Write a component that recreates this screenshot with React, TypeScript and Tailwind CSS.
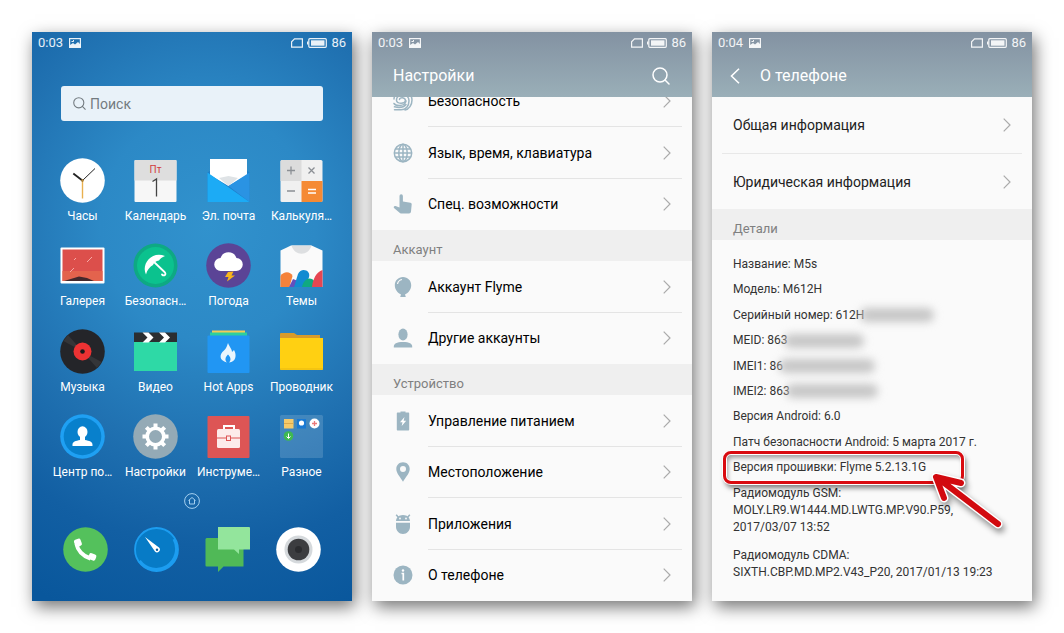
import type { ReactNode } from "react";

type AppItem = { name: string; icon: ReactNode };
type Setting = { name: string; icon: ReactNode };

const apps: AppItem[] = [
  {
    name: "Часы",
    icon: (
      <>
        <circle cx="22.5" cy="22.5" r="22.3" fill="#fff" />
        <path d="M22.5 22.5V40.5" stroke="#e9b04f" strokeWidth="1.4" />
        <path d="M22.5 22.5L35 10.5" stroke="#222" strokeWidth="1" />
        <path d="M23 23L13.3 15.5" stroke="#222" strokeWidth="1.8" />
        <circle cx="22.5" cy="22.5" r="1.3" fill="#b98a3a" />
      </>
    ),
  },
  {
    name: "Календарь",
    icon: (
      <>
        <rect x="1.5" y="2" width="42" height="42" rx="1" fill="#f7f7f7" />
        <path d="M1.5 3a1 1 0 0 1 1-1h40a1 1 0 0 1 1 1v19.500h-42z" fill="#dedede" />
        <text x="22.5" y="14.500" fontSize="10" textAnchor="middle" fill="#d23c3c">Пт</text>
        <path d="M19.500 23.500l4-2.500v17.500" fill="none" stroke="#444" strokeWidth="1.300" />
      </>
    ),
  },
  {
    name: "Эл. почта",
    icon: (
      <>
        <path d="M1.500 14.500l3-2h36.500l2.500 2V44h-42z" fill="#1f7fc9" />
        <path d="M4 1h37v16L22.500 28 4 17z" fill="#fff" />
        <path d="M13 20l9.500-2 9.500 2-9.500 8z" fill="#dfe3e6" />
        <path d="M43.500 14.500V44L22.500 28z" fill="#2a93e3" />
        <path d="M1.500 14.500L43.500 44h-42z" fill="#1cabf5" />
      </>
    ),
  },
  {
    name: "Калькуля…",
    icon: (
      <>
        <rect x="1.500" y="2" width="42" height="42" rx="1.500" fill="#f0f0f0" />
        <path d="M1.500 3.500A1.500 1.500 0 0 1 3 2h19.500v21h-21z" fill="#dcdcdc" />
        <path d="M22.500 23h21v19.500a1.500 1.500 0 0 1-1.500 1.500H22.500z" fill="#f58a34" />
        <path d="M8 12.500h8M12 8.500v8M8 33h8M29.500 9.500l6 6M35.500 9.500l-6 6" stroke="#8b8f94" strokeWidth="1.300" />
        <path d="M29 31.500h8M29 35h8" stroke="#fff" strokeWidth="1.300" />
      </>
    ),
  },
  {
    name: "Галерея",
    icon: (
      <>
        <rect x=".5" y="4.500" width="44" height="36" rx="1" fill="#fff" />
        <path d="M2.500 6.500h40v31.500h-40z" fill="#dc4f4b" />
        <path d="M2.500 28h40v10h-40z" fill="#e3634d" />
        <path d="M4 38l15-4.500 8 1.500 7 3z" fill="#43282c" />
        <path d="M27 19l5-5M10 29l4-4M14 17l2-2" stroke="#f6aaa5" strokeWidth="1" />
      </>
    ),
  },
  {
    name: "Безопасн…",
    icon: (
      <>
        <circle cx="22.5" cy="22.5" r="22" fill="#0ea983" />
        <circle cx="22.5" cy="22.5" r="18.500" fill="#0bc28e" />
        <path d="M13 31.500c-5-9.500 5-24 19-18.500-3 1.500-5 2.500-6 4.500-3 .5-5 2-6 4.500-3 1.500-6 5-7 9.500z" fill="#fff" />
        <path d="M20 18l11.500 11c2.500 2.500-.5 4.500-2.500 2.500" fill="none" stroke="#fff" strokeWidth="1.800" strokeLinecap="round" />
      </>
    ),
  },
  {
    name: "Погода",
    icon: (
      <>
        <circle cx="22.5" cy="22.5" r="22.3" fill="#5b4496" />
        <path d="M15 28a6.500 6.500 0 0 1-.5-13 8.500 8.500 0 0 1 16 0A6.500 6.500 0 0 1 30 28z" fill="#fff" />
        <path d="M22 29l5.500-.5-2 4h3.500l-8 6 1.500-4.500H19z" fill="#f8b51c" />
      </>
    ),
  },
  {
    name: "Темы",
    icon: (
      <>
        <path d="M12 2.500h20.500L43.500 7.500V44h-42V7.500z" fill="#fafafa" />
        <path d="M12.500 2.500c3 11 17 11 20 0z" fill="#dddfe1" />
        <path d="M1.500 44V33c3-5 10-5 12 0l-3 11z" fill="#f5823a" />
        <path d="M10 44l4-8 5 2v6z" fill="#6350bd" />
        <path d="M15 44l4-13c3-7 13-4 11 3l-3 10z" fill="#128bd1" />
        <path d="M23 44c2-9 9-11 13-5l-2 5z" fill="#10a980" />
        <path d="M33 44c1-8 4-15 10.500-17v17z" fill="#e64652" />
      </>
    ),
  },
  {
    name: "Музыка",
    icon: (
      <>
        <circle cx="22.5" cy="22.5" r="22.3" fill="#242529" />
        <path d="M22.500 22.500L8 6l-4.500 6zM22.500 22.500L37 39l4.500-6z" fill="#343538" />
        <circle cx="22.5" cy="22.5" r="9" fill="#ec3233" />
        <circle cx="22.5" cy="22.5" r="2.300" fill="#1a1a1c" />
      </>
    ),
  },
  {
    name: "Видео",
    icon: (
      <>
        <path d="M1 3.500h43v10H1z" fill="#2b2e31" />
        <path d="M1 13h43v29H1z" fill="#2ed9a6" />
        <path d="M9.500 3.500h6l5 5-5 5h-6l5-5zM26 3.500h6l5 5-5 5h-6l5-5z" fill="#fff" />
      </>
    ),
  },
  {
    name: "Hot Apps",
    icon: (
      <>
        <path d="M6 1.500h33v4H6z" fill="#f2cb56" />
        <path d="M4 3.500h37v5H4z" fill="#2ccf9e" />
        <rect x="1.500" y="6.500" width="42" height="37.500" rx="1" fill="#2196f3" />
        <path d="M22 14c2 5 4 6 4 9l2-2c3 5 2 12-5 12.500 3-3 1-6-1-8-2 2-4 5-1 8-8-2-8-8-3-12 3-3 3-5 4-7.500z" fill="#eaf5fd" />
      </>
    ),
  },
  {
    name: "Проводник",
    icon: (
      <>
        <path d="M1 5a1 1 0 0 1 1-1h13l3 2h23v5H1z" fill="#d79b2a" />
        <path d="M1 9h43v31a1 1 0 0 1-1 1H2a1 1 0 0 1-1-1z" fill="#ffd012" />
        <path d="M1 40h43" stroke="#e9b910" />
      </>
    ),
  },
  {
    name: "Центр по…",
    icon: (
      <>
        <circle cx="22.5" cy="22.5" r="22.3" fill="#1fa0f3" />
        <circle cx="22.5" cy="22.5" r="18.800" fill="#0880cc" />
        <ellipse cx="22.5" cy="18" rx="5" ry="5.800" fill="#fff" />
        <path d="M20 22h5v4c4 1 8 1 7.500 6h-20c-.5-5 3.500-5 7.500-6z" fill="#fff" />
      </>
    ),
  },
  {
    name: "Настройки",
    icon: (
      <>
        <circle cx="22.5" cy="22.5" r="22.3" fill="#94aab6" />
        <circle cx="22.5" cy="22.5" r="8.300" fill="none" stroke="#fff" strokeWidth="3.600" />
        <path
          d="M22.500 9.500v4M22.500 31.500v4M9.500 22.500h4M31.500 22.500h4M13.300 13.300l2.800 2.800M28.900 28.900l2.800 2.800M31.700 13.300l-2.800 2.800M16.100 28.900l-2.800 2.800"
          stroke="#fff"
          strokeWidth="4"
        />
      </>
    ),
  },
  {
    name: "Инструме…",
    icon: (
      <>
        <rect x="1.500" y="2" width="42" height="42" rx="1" fill="#dd5555" />
        <path d="M18 16v-4h10v4" fill="none" stroke="#fff" strokeWidth="2" />
        <rect x="11" y="15" width="23" height="19" rx="1.500" fill="#fdebea" />
        <path d="M11 24h23" stroke="#dd5555" />
        <rect x="20.500" y="22" width="4" height="4.500" fill="#fdebea" stroke="#dd5555" />
      </>
    ),
  },
  {
    name: "Разное",
    icon: (
      <>
        <rect x="1" y="1" width="43" height="43" rx="1.500" fill="#fff" opacity=".15" />
        <path d="M5 5h9.500v9.500H5z" fill="#f6ca6a" />
        <path d="M5 9.500h9.500" stroke="#dda94d" />
        <path d="M18 5h9v9.500h-9z" fill="#1979d3" />
        <circle cx="22.500" cy="9" r="2.600" fill="#fff" />
        <circle cx="35.500" cy="9.500" r="5" fill="#fff" />
        <path d="M33 9.500h5M35.500 7v5" stroke="#e8797a" strokeWidth="1.300" />
        <circle cx="9.500" cy="22" r="4.800" fill="#3fb950" />
        <path d="M9.500 19.500v4.500M7.500 22.500l2 2 2-2" stroke="#fff" fill="none" />
      </>
    ),
  },
];

const dock: AppItem[] = [
  {
    name: "Телефон",
    icon: (
      <>
        <circle cx="22.5" cy="22.500" r="22.300" fill="#54c15c" />
        <path d="M13.500 17c1 6 6 12 14 14.500" fill="none" stroke="#fff" strokeWidth="4" />
        <rect x="11.500" y="12" width="7" height="7.500" rx="2" transform="rotate(-20 15 16)" fill="#fff" />
        <rect x="25.500" y="26.500" width="7.500" height="6.500" rx="2" transform="rotate(20 29 30)" fill="#fff" />
      </>
    ),
  },
  {
    name: "Браузер",
    icon: (
      <>
        <circle cx="22.500" cy="22.500" r="21.500" fill="#077bc6" stroke="#1c9df0" strokeWidth="1.800" />
        <path d="M40 12A20.500 20.500 0 0 1 5.500 34" fill="none" stroke="#1c9df0" strokeWidth="3" />
        <path d="M11 10l14 10.500a2.500 2.500 0 0 1-4 4z" fill="#fff" />
        <circle cx="23" cy="22.700" r="1.200" fill="#0a5c9c" />
      </>
    ),
  },
  {
    name: "Сообщения",
    icon: (
      <>
        <path d="M1.500 11h37v28.500H18.500L13 45v-5.500H1.500a1 1 0 0 1-1-1V12z" fill="#50b957" />
        <path d="M13 0h31a1 1 0 0 1 1 1v21.500H34V27l-5-4.500H13z" fill="#93e59c" />
      </>
    ),
  },
  {
    name: "Камера",
    icon: (
      <>
        <circle cx="22.500" cy="22.500" r="22.300" fill="#fff" />
        <circle cx="22.500" cy="22.500" r="14" fill="#d5d9dc" />
        <circle cx="22.500" cy="22.500" r="10.800" fill="#3c3d40" />
        <circle cx="22.500" cy="22.500" r="3.500" fill="#2b2c2f" />
      </>
    ),
  },
];

const security: Setting = {
  name: "Безопасность",
  icon: (
    <g fill="none" stroke="currentColor" strokeWidth="1.500" strokeLinecap="round">
      <path d="M1 8C1 4 5 1 10 1s9 3 9 8-3 9.500-7 10" />
      <path d="M1.500 18.800h6.500c5 0 8-4 8-9C16 2 3 2 3.500 9.500c.5 3.500 8 3.500 9 .5 0-4-6-4-6-1.500" />
      <path d="M1 12.500c1.500 2.500 11 3.500 12-2.500M1.500 15.800c4 1 9 .8 11.500-2.300" />
    </g>
  ),
};

const general: Setting[] = [
  {
    name: "Язык, время, клавиатура",
    icon: (
      <g fill="none" stroke="currentColor" strokeWidth="1.500">
        <circle cx="10" cy="10" r="8.700" />
        <ellipse cx="10" cy="10" rx="4.200" ry="8.700" />
        <path d="M10 1.300v17.400M2.500 6h15M2.500 14h15M1.300 10h17.400" />
      </g>
    ),
  },
  {
    name: "Спец. возможности",
    icon: (
      <path
        fill="currentColor"
        d="M6.500 2a1.700 1.700 0 0 1 3.400 0v5.500l7.600 1.300c.8.200 1.200.7 1.200 1.500L18 17.500c-.2 1.300-.8 2-2 2H8.500c-1 0-1.500-.4-2.200-1L1 14c-.8-1 .2-2.500 1.500-2l4 1.500z"
      />
    ),
  },
];

const account: Setting[] = [
  {
    name: "Аккаунт Flyme",
    icon: (
      <>
        <path fill="currentColor" d="M10 0c4.800 0 8.200 3.600 8.200 8.300 0 4.200-2.700 7.500-6.200 9.200l.8 2.500H7.200l.8-2.500c-3.500-1.700-6.200-5-6.200-9.200C1.800 3.600 5.200 0 10 0z" />
        <path d="M4.500 7c.5-2.500 2-4 4.500-4.500" fill="none" stroke="#fafafa" strokeWidth="1.200" />
      </>
    ),
  },
  {
    name: "Другие аккаунты",
    icon: (
      <>
        <ellipse cx="10" cy="6.500" rx="4.600" ry="6" fill="currentColor" />
        <path fill="currentColor" d="M.8 19.500c-.5-4 3-5.500 9.200-5.500s9.700 1.500 9.200 5.500z" />
      </>
    ),
  },
];

const device: Setting[] = [
  {
    name: "Управление питанием",
    icon: (
      <>
        <path fill="currentColor" d="M7.500.5h5v1h2.700c.6 0 1 .4 1 1v16c0 .6-.4 1-1 1H4.800c-.6 0-1-.4-1-1v-16c0-.6.4-1 1-1h2.700z" />
        <path fill="#fff" d="M11.500 6L7 11.200h2.500L8.700 15l4.500-5.200h-2.600z" />
      </>
    ),
  },
  {
    name: "Местоположение",
    icon: (
      <path
        fill="currentColor"
        fillRule="evenodd"
        d="M10 .3c3.900 0 6.700 2.900 6.700 6.600 0 4.600-4.500 8.600-6.700 12.800C7.800 15.500 3.300 11.500 3.300 6.900 3.300 3.200 6.100.3 10 .3zM10 4a3 3 0 1 0 0 6 3 3 0 0 0 0-6z"
      />
    ),
  },
  {
    name: "Приложения",
    icon: (
      <>
        <path fill="currentColor" d="M3 7c.2-3 2.500-6 7-6s6.800 3 7 6zM3 8.800h14v4c0 4-3 7.200-7 7.200s-7-3.200-7-7.200z" />
        <path d="M5.500 3.500L3.200.8M14.500 3.500L16.800.8" stroke="currentColor" strokeWidth="1.500" />
        <circle cx="7" cy="4.500" r=".9" fill="#fafafa" />
        <circle cx="13" cy="4.500" r=".9" fill="#fafafa" />
      </>
    ),
  },
  {
    name: "О телефоне",
    icon: (
      <>
        <circle cx="10" cy="10" r="9.500" fill="currentColor" />
        <path d="M8.500 8.500h1.800v7" fill="none" stroke="#fff" strokeWidth="1.700" />
        <circle cx="10" cy="5.500" r="1.200" fill="#fff" />
      </>
    ),
  },
];

function StatusBar({ time }: { time: string }) {
  return (
    <div className="flex h-[22px] shrink-0 items-center px-1.5 text-[13px] text-white/90">
      <span>{time}</span>
      <svg viewBox="0 0 12 10" className="ml-1.5 h-2.5 w-3" fill="none" stroke="currentColor">
        <rect x=".6" y=".6" width="10.800" height="8.800" strokeWidth="1.200" />
        <path d="M1 9V7l3-2 2 1.500L9 4l2.500 2.500V9z" fill="currentColor" stroke="none" />
        <path d="M2.500 3.500h2M4.500 2v1.500" />
      </svg>
      <svg viewBox="0 0 12 10" className="ml-auto h-2.5 w-3" fill="none" stroke="currentColor" strokeWidth="1.200">
        <path d="M3.500.9h7.900v8.200H.6V3.800z" />
      </svg>
      <svg viewBox="0 0 20 10" className="mx-1 h-2.5 w-5" fill="none" stroke="currentColor">
        <rect x="1.800" y=".7" width="17.500" height="8.600" rx="1" strokeWidth="1.200" />
        <path d="M.6 3.500v3" strokeWidth="1.200" />
        <path d="M4 2.300h13.500v5.400H4z" fill="currentColor" stroke="none" />
      </svg>
      <span>86</span>
    </div>
  );
}

function SearchIcon({ className }: { className: string }) {
  return (
    <svg viewBox="0 0 18 18" className={className} fill="none" stroke="currentColor" strokeWidth="1.500" aria-hidden="true">
      <circle cx="8" cy="8" r="7" />
      <path d="M13 13l4 4" strokeLinecap="round" />
    </svg>
  );
}

function Chevron() {
  return (
    <svg viewBox="0 0 8 14" className="h-3.5 w-2 shrink-0 text-[#aaa]" fill="none" stroke="currentColor" strokeWidth="1.200" aria-hidden="true">
      <path d="M.7.7L7 7 .7 13.300" />
    </svg>
  );
}

function AppIcon({ icon }: { icon: ReactNode }) {
  return (
    <svg viewBox="0 0 45 45" className="size-[45px]" aria-hidden="true">
      {icon}
    </svg>
  );
}

function Phone({ children, className = "" }: { children: ReactNode; className?: string }) {
  return (
    <section className={`flex flex-col shadow-[3px_6px_16px_rgba(0,0,0,0.55)] ${className}`}>
      {children}
    </section>
  );
}

function HomeScreen() {
  return (
    <Phone className="bg-[radial-gradient(ellipse_120%_72%_at_55%_34%,#3192cd_0%,#2c89c6_28%,#2071b1_55%,#125fa3_78%,#09579c_100%)]">
      <StatusBar time="0:03" />
      <label className="mx-[29px] mt-8 flex h-[35px] shrink-0 items-center gap-1 rounded-[3px] bg-[#e9f2f9] px-3 text-[#737b80]">
        <SearchIcon className="size-[13px]" />
        <input
          type="search"
          aria-label="Поиск"
          placeholder="Поиск"
          className="min-w-0 flex-1 bg-transparent text-sm outline-none placeholder:text-[#737b80]"
        />
      </label>

      <div className="mx-3.5 mt-[37px] grid flex-1 auto-rows-fr grid-cols-4">
        {apps.map((app) => (
          <button key={app.name} type="button" className="flex flex-col items-center">
            <AppIcon icon={app.icon} />
            <span className="mt-[5px] text-xs leading-4 whitespace-nowrap text-white">{app.name}</span>
          </button>
        ))}
      </div>

      <svg viewBox="0 0 16 16" className="mx-auto -mt-1.5 size-4 shrink-0 text-[#a5d0f0]" fill="none" stroke="currentColor" aria-hidden="true">
        <circle cx="8" cy="8" r="7.400" />
        <path d="M4.500 7.500L8 4.500l3.500 3M5.500 7v4h5V7" />
      </svg>

      <nav className="mx-[18px] mb-[29px] grid grid-cols-4 pt-[18px]">
        {dock.map((app) => (
          <button key={app.name} type="button" aria-label={app.name} className="flex justify-center">
            <AppIcon icon={app.icon} />
          </button>
        ))}
      </nav>
    </Phone>
  );
}

function SettingRow({ item, last = false }: { item: Setting; last?: boolean }) {
  return (
    <a href="#" className="flex min-h-12 flex-1 items-stretch pl-[21px]">
      <svg viewBox="0 0 20 20" className="size-5 shrink-0 self-center text-[#9cb5c2]" aria-hidden="true">
        {item.icon}
      </svg>
      <span
        className={`mr-2.5 ml-[15px] flex flex-1 items-center justify-between border-b pt-px pr-[11px] text-sm text-black ${
          last ? "border-transparent" : "border-[#e4e4e4]"
        }`}
      >
        {item.name}
        <Chevron />
      </span>
    </a>
  );
}

function SectionTitle({ children }: { children: ReactNode }) {
  return (
    <h2 className="flex h-[31px] shrink-0 items-end bg-[#efefef] px-[21px] pb-0.5 text-[13px] leading-[18px] text-[#808080]">
      {children}
    </h2>
  );
}

function SettingList({ items }: { items: Setting[] }) {
  return (
    <>
      {items.map((item, i) => (
        <SettingRow key={item.name} item={item} last={i === items.length - 1} />
      ))}
    </>
  );
}

function SettingsScreen() {
  return (
    <Phone className="bg-[#fafafa]">
      <header className="h-[65px] shrink-0 bg-linear-to-b from-[#8392a2] to-[#9aafb8]">
        <StatusBar time="0:03" />
        <div className="flex items-center justify-between pr-[22px] pl-[21px] text-white">
          <h1 className="text-base leading-[44px]">Настройки</h1>
          <button type="button" aria-label="Поиск">
            <SearchIcon className="size-[18px]" />
          </button>
        </div>
      </header>
      {/* scrolled so that only the lower part of this row shows */}
      <div className="flex h-[30px] shrink-0 flex-col justify-end overflow-hidden">
        <div className="flex h-[52px] shrink-0">
          <SettingRow item={security} />
        </div>
      </div>
      <SettingList items={general} />
      <SectionTitle>Аккаунт</SectionTitle>
      <SettingList items={account} />
      <SectionTitle>Устройство</SectionTitle>
      <SettingList items={device} />
    </Phone>
  );
}

function Redacted({ className }: { className: string }) {
  return <span className={`-ml-1 inline-block h-3.5 rounded-full bg-[#c6c6c6] align-middle blur-[4px] ${className}`} />;
}

function AboutScreen() {
  return (
    <Phone className="bg-[#fafafa]">
      <header className="h-[65px] shrink-0 bg-linear-to-b from-[#8392a2] to-[#9aafb8]">
        <StatusBar time="0:04" />
        <div className="flex items-center gap-5 pl-[18px] text-white">
          <button type="button" aria-label="Назад">
            <svg viewBox="0 0 10 16" className="h-4 w-2.5" fill="none" stroke="currentColor" strokeWidth="1.600">
              <path d="M9 .7L1.500 8 9 15.300" />
            </svg>
          </button>
          <h1 className="text-base leading-[44px]">О телефоне</h1>
        </div>
      </header>

      <a href="#" className="mx-2.5 flex h-[57px] shrink-0 items-center justify-between border-b border-[#e8e8e8] px-[11px] text-sm text-[#222]">
        Общая информация
        <Chevron />
      </a>
      <a href="#" className="mx-2.5 flex h-[55px] shrink-0 items-center justify-between px-[11px] text-sm text-[#222]">
        Юридическая информация
        <Chevron />
      </a>
      <SectionTitle>Детали</SectionTitle>

      <ul className="flex flex-1 flex-col justify-between px-[21px] pt-4 pb-5 text-xs leading-[17px] text-[#333]">
        <li>Название: M5s</li>
        <li>Модель: M612H</li>
        <li className="flex items-center">
          Серийный номер: 612H
          <Redacted className="w-[74px]" />
        </li>
        <li className="flex items-center">
          MEID: 863
          <Redacted className="w-20" />
        </li>
        <li className="flex items-center">
          IMEI1: 86
          <Redacted className="w-24" />
        </li>
        <li className="flex items-center">
          IMEI2: 863
          <Redacted className="w-[92px]" />
        </li>
        <li>Версия Android: 6.0</li>
        <li>Патч безопасности Android: 5 марта 2017 г.</li>
        <li className="relative">
          Версия прошивки: Flyme 5.2.13.1G
          <span className="absolute -top-2 -left-[10px] h-[33px] w-[241px] rounded-lg border-3 border-[#d90b10] shadow-[0_0_0_1px_#fff,2px_4px_5px_rgba(0,0,0,0.5),inset_0_0_0_1px_#fff,inset_2px_4px_4px_rgba(0,0,0,0.35)]" />
          <svg
            viewBox="0 0 76 64"
            className="absolute top-3.5 left-[198px] h-16 w-[76px] drop-shadow-[2px_4px_3px_rgba(0,0,0,0.45)]"
            fill="none"
            strokeLinecap="round"
            strokeLinejoin="round"
            aria-hidden="true"
          >
            <path d="M12 9L67 51M13 25L5 4l25 6" stroke="#fff" strokeWidth="9" />
            <path d="M12 9L67 51M13 25L5 4l25 6" stroke="#d20a0f" strokeWidth="6" />
          </svg>
        </li>
        <li className="mb-[3px]">
          Радиомодуль GSM:
          <br />
          MOLY.LR9.W1444.MD.LWTG.MP.V90.P59,
          <br />
          2017/03/07 13:52
        </li>
        <li>
          Радиомодуль CDMA:
          <br />
          SIXTH.CBP.MD.MP2.V43_P20, 2017/01/13 19:23
        </li>
      </ul>
    </Phone>
  );
}

export default function App() {
  return (
    <main className="grid min-h-screen grid-cols-3 gap-5 bg-white p-8 font-[Roboto,sans-serif]">
      <HomeScreen />
      <SettingsScreen />
      <AboutScreen />
    </main>
  );
}
